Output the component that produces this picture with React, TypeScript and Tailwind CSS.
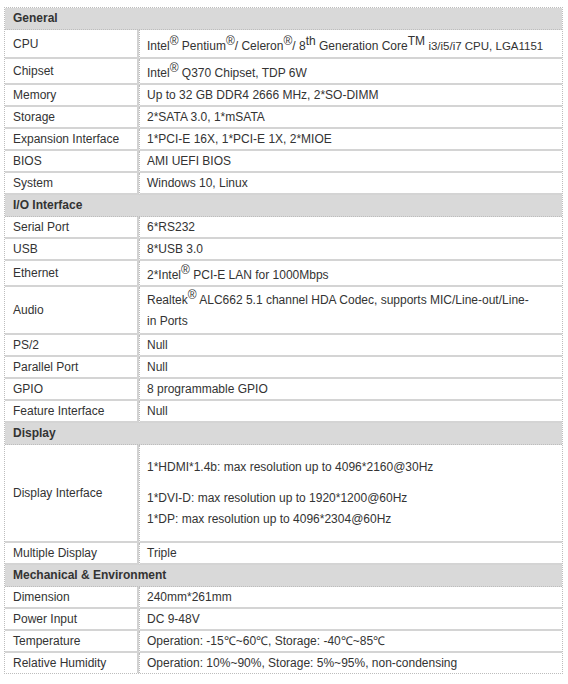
import React from "react";

type Row = { label: string; value: React.ReactNode; cls?: string };
type Section = { title: string; rows: Row[] };

const Sup = ({ children }: { children: React.ReactNode }) => (
  <span className="text-[12px] align-[5px] leading-none">{children}</span>
);
const R = () => <Sup>®</Sup>;

const sections: Section[] = [
  {
    title: "General",
    rows: [
      {
        label: "CPU",
        cls: "pt-[5px] pb-[1px]",
        value: (
          <>
            Intel
            <R /> Pentium
            <R />/ Celeron
            <R />/ 8<Sup>th</Sup> Generation Core<Sup>TM</Sup>{" "}
            <span className="text-[11.5px]">i3/i5/i7 CPU, LGA1151</span>
          </>
        ),
      },
      {
        label: "Chipset",
        cls: "pt-[3px]",
        value: (
          <>
            Intel
            <R /> Q370 Chipset, TDP 6W
          </>
        ),
      },
      { label: "Memory", value: "Up to 32 GB DDR4 2666 MHz, 2*SO-DIMM" },
      { label: "Storage", value: "2*SATA 3.0, 1*mSATA" },
      { label: "Expansion Interface", value: "1*PCI-E 16X, 1*PCI-E 1X, 2*MIOE" },
      { label: "BIOS", value: "AMI UEFI BIOS" },
      { label: "System", value: "Windows 10, Linux" },
    ],
  },
  {
    title: "I/O Interface",
    rows: [
      { label: "Serial Port", value: "6*RS232" },
      { label: "USB", value: "8*USB 3.0" },
      {
        label: "Ethernet",
        cls: "pt-[3px] pb-0",
        value: (
          <>
            2*Intel
            <R /> PCI-E LAN for 1000Mbps
          </>
        ),
      },
      {
        label: "Audio",
        cls: "pt-[2px] pb-[1px] leading-[21px]",
        value: (
          <>
            Realtek
            <R /> ALC662 5.1 channel HDA Codec, supports MIC/Line-out/Line-
            <br />
            in Ports
          </>
        ),
      },
      { label: "PS/2", value: "Null" },
      { label: "Parallel Port", value: "Null" },
      { label: "GPIO", value: "8 programmable GPIO" },
      { label: "Feature Interface", value: "Null" },
    ],
  },
  {
    title: "Display",
    rows: [
      {
        label: "Display Interface",
        cls: "pt-[12px] pb-[11px] leading-[21px]",
        value: (
          <>
            <div className="mb-[10px]">1*HDMI*1.4b: max resolution up to 4096*2160@30Hz</div>
            <div>1*DVI-D: max resolution up to 1920*1200@60Hz</div>
            <div>1*DP: max resolution up to 4096*2304@60Hz</div>
          </>
        ),
      },
      { label: "Multiple Display", value: "Triple" },
    ],
  },
  {
    title: "Mechanical & Environment",
    rows: [
      { label: "Dimension", value: "240mm*261mm" },
      { label: "Power Input", value: "DC 9-48V" },
      { label: "Temperature", value: "Operation: -15℃~60℃, Storage: -40℃~85℃" },
      { label: "Relative Humidity", value: "Operation: 10%~90%, Storage: 5%~95%, non-condensing" },
    ],
  },
];

export default function App() {
  return (
    <div className="w-[568px] h-[684px] bg-white pt-[7px] pl-[4px] font-['Liberation_Sans',Arial,sans-serif] text-[12px] text-[#333]">
      <table className="w-[559px] border-separate border-spacing-0 border border-dotted border-[#bdbdbd] table-fixed">
        <colgroup>
          <col className="w-[134px]" />
          <col />
        </colgroup>
        <tbody>
          {sections.map((s, si) => (
            <React.Fragment key={s.title}>
              <tr>
                <td
                  colSpan={2}
                  className="bg-[#d9d9d9] font-bold pl-[8px] leading-[21px] border-b border-dotted border-[#bdbdbd]"
                >
                  {s.title}
                </td>
              </tr>
              {s.rows.map((r, i) => {
                const last = si === sections.length - 1 && i === s.rows.length - 1;
                return (
                  <tr key={r.label}>
                    <td
                      className={
                        "align-middle pl-[8px] leading-[20px] border-r-2 border-r-[#d2d2d2] " +
                        (last ? "" : "border-b-2 border-b-[#d4d4d4] ")
                      }
                    >
                      {r.label}
                    </td>
                    <td
                      className={
                        "align-middle pl-[7px] pr-[10px] leading-[20px] border-l border-dotted border-l-[#bdbdbd] " +
                        (last ? "" : "border-b-2 [border-bottom-style:solid] border-b-[#d4d4d4] ") +
                        (r.cls ?? "")
                      }
                    >
                      {r.value}
                    </td>
                  </tr>
                );
              })}
            </React.Fragment>
          ))}
        </tbody>
      </table>
    </div>
  );
}
